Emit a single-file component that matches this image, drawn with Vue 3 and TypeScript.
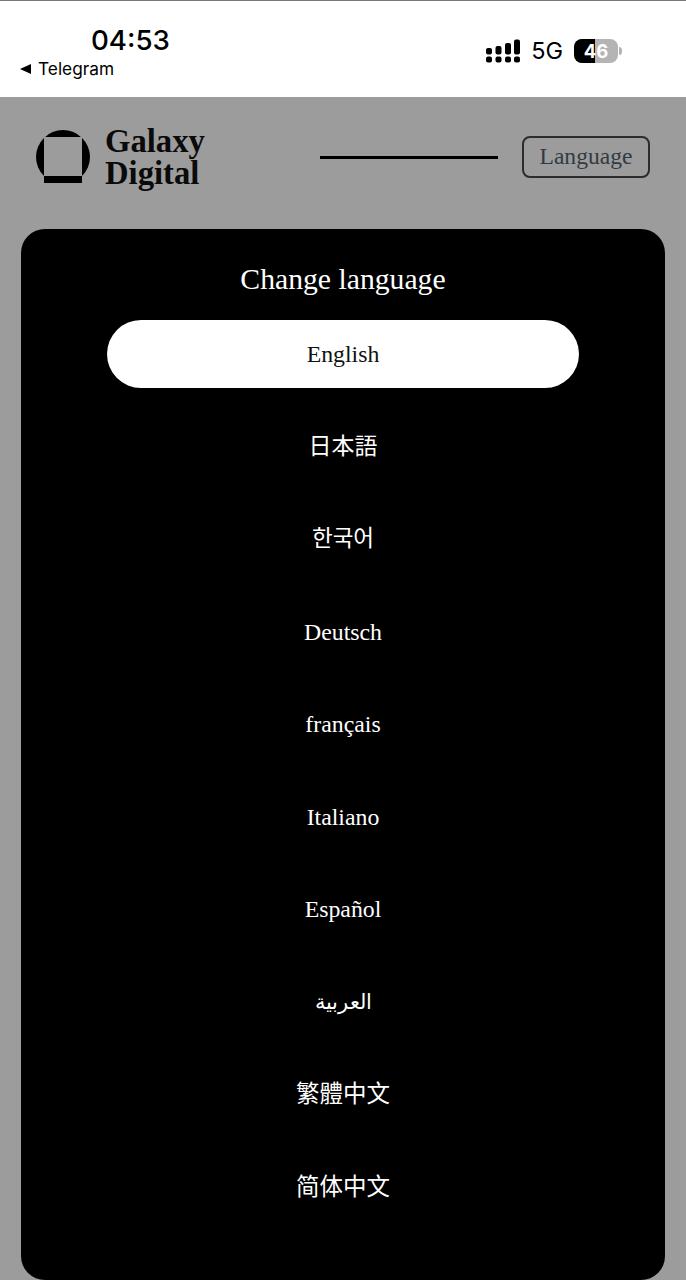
<script setup lang="ts">
interface Language {
  label: string
  kind: string
}

const languages: Language[] = [
  { label: '日本語', kind: 'cjk-jp' },
  { label: '한국어', kind: 'ko' },
  { label: 'Deutsch', kind: 'latin' },
  { label: 'français', kind: 'latin' },
  { label: 'Italiano', kind: 'latin' },
  { label: 'Español', kind: 'latin' },
  { label: 'العربية', kind: 'ar' },
  { label: '繁體中文', kind: 'cjk-tc' },
  { label: '简体中文', kind: 'cjk-sc' },
]
</script>

<template>
  <div class="page">
    <div class="status">
      <div class="status-left">
        <div class="time">04:53</div>
        <div class="back"><span class="tri"></span>Telegram</div>
      </div>
      <div class="status-right">
        <svg class="signal" width="34" height="24" viewBox="0 0 34 24" fill="#000">
          <rect x="0" y="9" width="6" height="6.5" rx="2" />
          <rect x="0" y="17.5" width="6" height="6" rx="2" />
          <rect x="9.5" y="7" width="6" height="8.5" rx="2" />
          <rect x="9.5" y="17.5" width="6" height="6" rx="2" />
          <rect x="19" y="4" width="6" height="11.5" rx="2" />
          <rect x="19" y="17.5" width="6" height="6" rx="2" />
          <rect x="28" y="0.5" width="6" height="15" rx="2" />
          <rect x="28" y="17.5" width="6" height="6" rx="2" />
        </svg>
        <span class="net">5G</span>
        <div class="battery">
          <div class="battery-fill"></div>
          <span class="battery-num">46</span>
          <span class="battery-cap"></span>
        </div>
      </div>
    </div>
    <div class="main">
      <header class="header">
        <div class="brand">
          <svg class="logo" width="56" height="56" viewBox="0 0 56 56">
            <circle cx="27" cy="28" r="27" fill="#000" />
            <rect x="8" y="8" width="38" height="39" fill="#9c9c9c" />
            <path d="M-1 42 L8 47 H46 L55 42 V56 H-1 Z" fill="#9c9c9c" />
            <rect x="8" y="47" width="38" height="7" fill="#000" />
          </svg>
          <div class="brand-name">Galaxy<br />Digital</div>
        </div>
        <div class="line"></div>
        <button class="lang-btn">Language</button>
      </header>
      <section class="panel">
        <h2 class="title">Change language</h2>
        <div class="current">English</div>
        <ul class="list">
          <li v-for="l in languages" :key="l.label" class="item" :class="l.kind">{{ l.label }}</li>
        </ul>
      </section>
    </div>
  </div>
</template>

<style>
html, body { margin: 0; background: #9c9c9c; }
</style>

<style scoped>
.page {
  width: 686px;
  height: 1280px;
  overflow: hidden;
  display: flex;
  flex-direction: column;
  font-family: "Liberation Serif", "Noto Sans CJK JP", serif;
}
.status {
  height: 97px;
  flex: none;
  box-sizing: border-box;
  border-top: 1px solid #777;
  background: #fff;
  display: flex;
  justify-content: space-between;
  font-family: Inter, "Liberation Sans", sans-serif;
  color: #000;
}
.status-left { padding: 22px 0 0 20px; }
.time {
  font-size: 27.7px;
  font-weight: 500;
  line-height: 34px;
  padding-left: 71px;
}
.back {
  display: flex;
  align-items: center;
  font-size: 17.3px;
  line-height: 22px;
  margin-top: 1px;
}
.tri {
  width: 0;
  height: 0;
  border-top: 5.5px solid transparent;
  border-bottom: 5.5px solid transparent;
  border-right: 11px solid #000;
  margin-right: 7px;
}
.status-right {
  display: flex;
  align-items: center;
  padding: 3px 68px 0 0;
  gap: 12px;
}
.signal { margin-right: -1px; }
.net { font-size: 23.5px; line-height: 26px; margin-right: -1px; }
.battery {
  position: relative;
  width: 44px;
  height: 24px;
  border-radius: 8px;
  background: #b4b4b4;
}
.battery-fill {
  width: 21px;
  height: 100%;
  background: #000;
  border-radius: 8px 0 0 8px;
}
.battery-num {
  position: absolute;
  inset: 0;
  text-align: center;
  color: #fff;
  font-size: 18.5px;
  font-weight: 700;
  line-height: 24px;
}
.battery-cap {
  position: absolute;
  right: -4px;
  top: 8px;
  width: 3px;
  height: 8px;
  background: #b4b4b4;
  border-radius: 0 3px 3px 0;
}
.main {
  flex: 1;
  background: #9c9c9c;
  padding: 0 21px;
  display: flex;
  flex-direction: column;
}
.header {
  display: flex;
  align-items: center;
  height: 120px;
  margin-bottom: 12px;
  flex: none;
  padding: 0 15px;
}
.brand { display: flex; align-items: center; gap: 13px; }
.brand-name {
  font-size: 32.7px;
  font-weight: 700;
  line-height: 32px;
  color: #0a0a0a;
  width: 100px;
}
.line {
  width: 178px;
  height: 3px;
  background: #000;
  margin-left: 115px;
}
.lang-btn {
  margin-left: 24px;
  width: 128px;
  height: 42px;
  box-sizing: border-box;
  border: 2px solid #2c2c2c;
  border-radius: 8px;
  background: transparent;
  color: #333a42;
  font-family: inherit;
  font-size: 23.6px;
  padding: 0 0 2px;
}
.panel {
  flex: 1;
  background: #000;
  border-radius: 24px;
  color: #fff;
  display: flex;
  flex-direction: column;
  align-items: center;
}
.title {
  margin: 30px 0 0;
  font-size: 29.7px;
  font-weight: 400;
  line-height: 40px;
}
.current {
  margin-top: 21px;
  width: 472px;
  height: 68px;
  border-radius: 34px;
  background: #fff;
  color: #111;
  font-size: 23.8px;
  text-align: center;
  line-height: 68px;
}
.list {
  list-style: none;
  margin: 12.5px 0 0;
  padding: 0;
  width: 100%;
}
.item {
  height: 92.5px;
  line-height: 92.5px;
  text-align: center;
  font-size: 23.8px;
}
.cjk-jp { font-size: 23px; }
.ko { font-size: 22.5px; }
.ar { font-size: 20.5px; }
.cjk-tc, .cjk-sc { font-size: 23.5px; }
.cjk-tc { font-family: "Liberation Serif", "Noto Sans CJK TC", serif; }
.cjk-sc { font-family: "Liberation Serif", "Noto Sans CJK SC", serif; }
</style>
